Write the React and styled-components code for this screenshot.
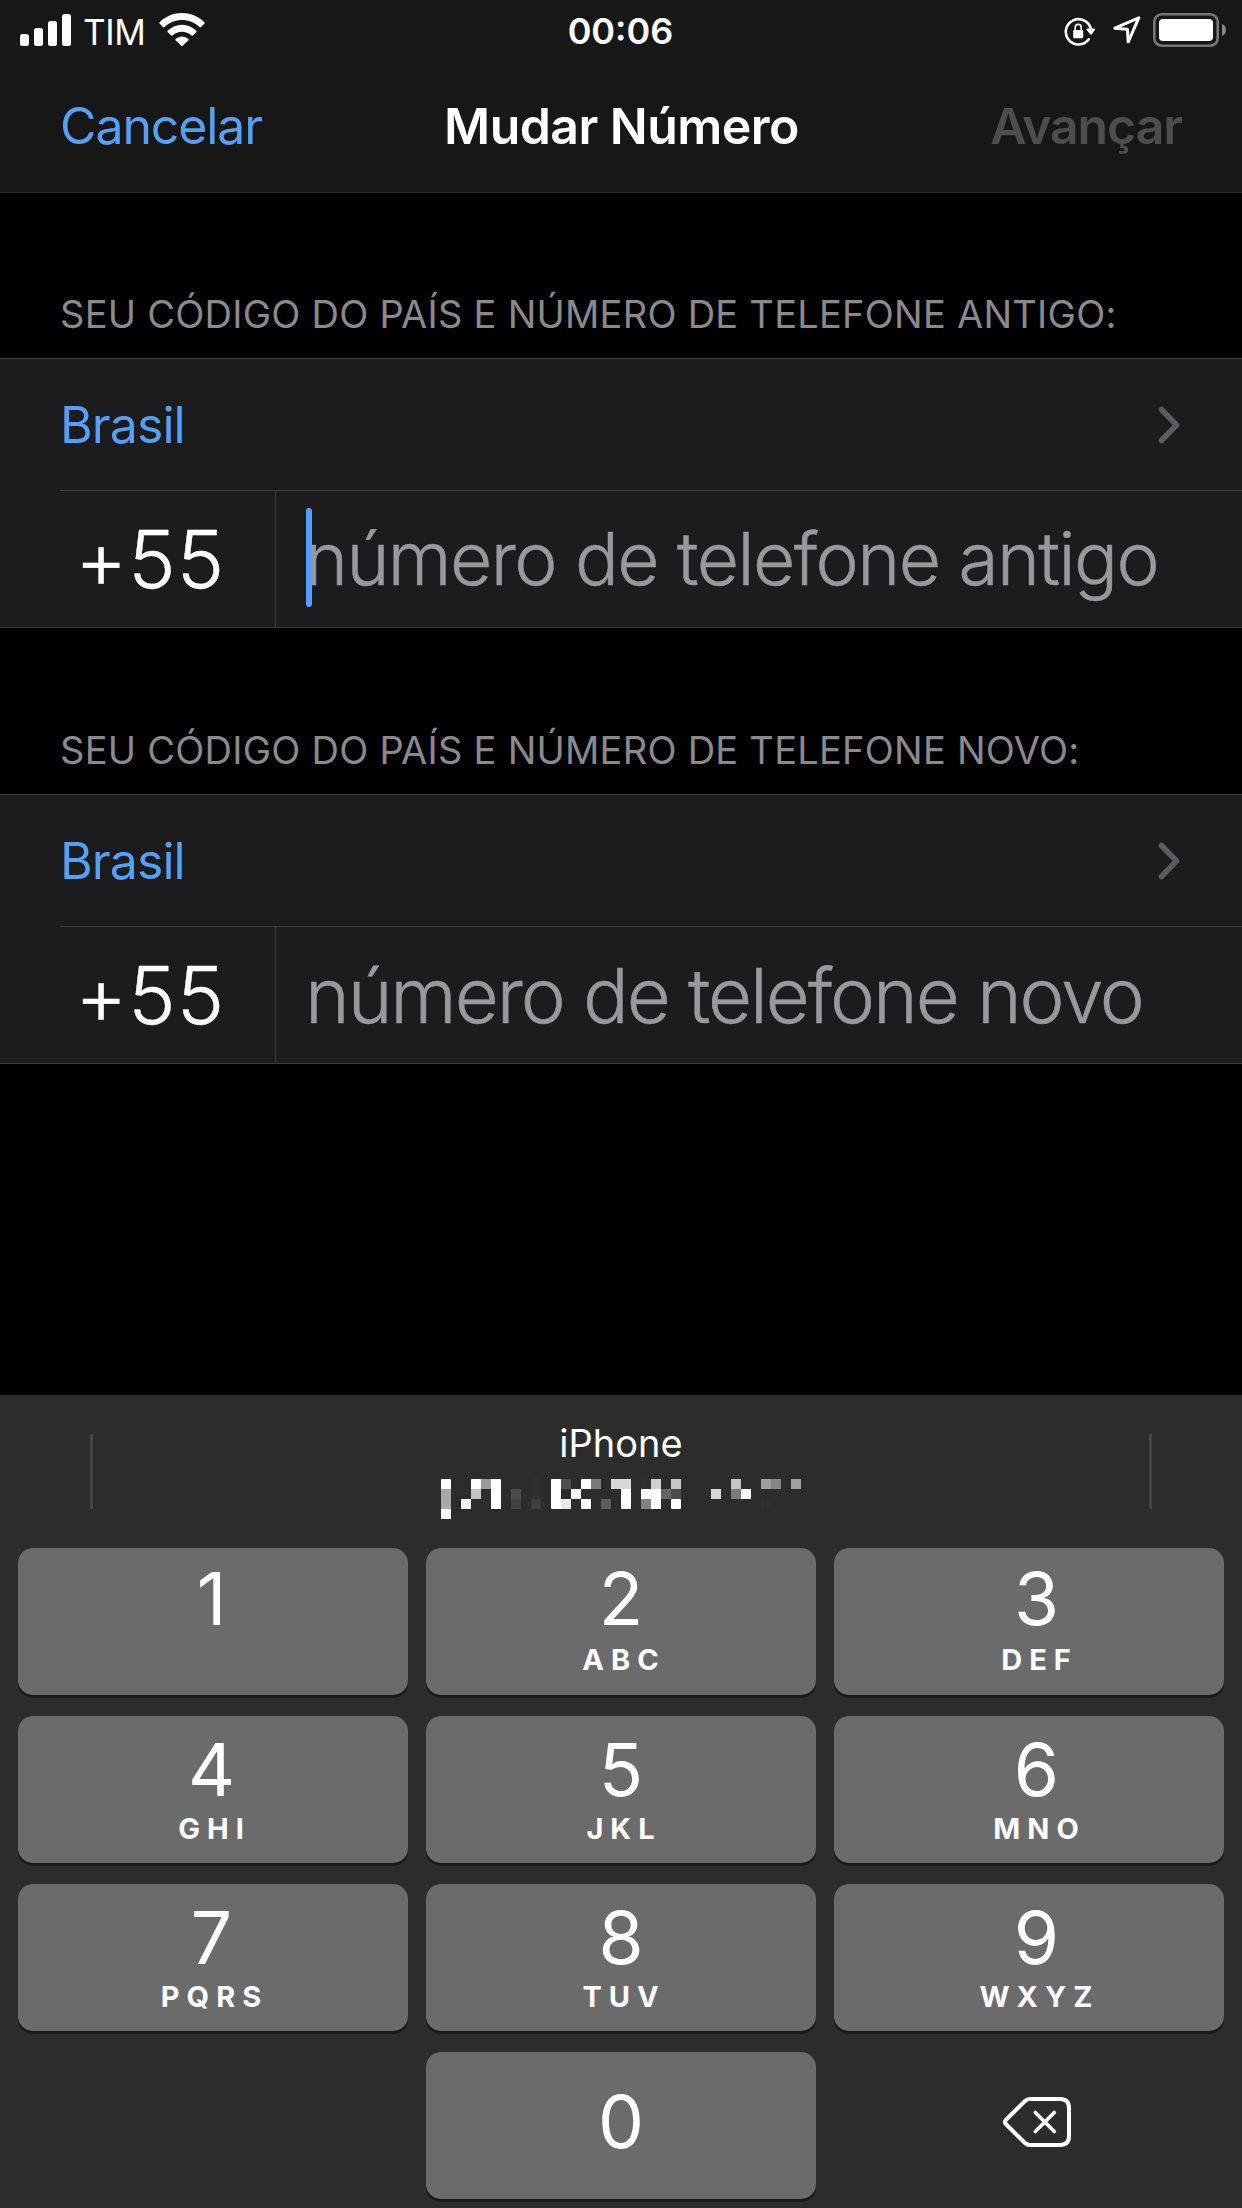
import styled, { createGlobalStyle } from "styled-components";

const GlobalStyle = createGlobalStyle`
  * {
    box-sizing: border-box;
  }

  body {
    margin: 0;
    background: #000;
  }
`;

const Screen = styled.div`
  display: flex;
  flex-direction: column;
  width: 1242px;
  height: 2208px;
  overflow: hidden;
  background: #000;
  color: #fff;
  font-family: Inter, "Liberation Sans", sans-serif;
`;

const Header = styled.header`
  height: 192px;
  background: #171717;
  box-shadow: 0 1px 0 #2a2a2b;
`;

const StatusBar = styled.div`
  display: grid;
  grid-template-columns: 1fr auto 1fr;
  height: 60px;
  padding: 0 16px 0 20px;
`;

const StatusGroup = styled.div`
  display: flex;
  align-items: center;
  justify-content: ${(props) => (props.$end ? "flex-end" : "flex-start")};
`;

const Carrier = styled.span`
  margin: 3px 14px 0 11px;
  font-size: 35px;
  line-height: 40px;
  letter-spacing: -0.4px;
`;

const Clock = styled.span`
  padding: 2px 5px 0 0;
  font-size: 36px;
  font-weight: 580;
  line-height: 58px;
  letter-spacing: 0;
`;

const NavBar = styled.nav`
  display: grid;
  grid-template-columns: 1fr auto 1fr;
  align-items: center;
  height: 132px;
  padding: 0 60px;
`;

const NavButton = styled.button`
  justify-self: ${(props) => (props.$end ? "end" : "start")};
  padding: 0;
  border: 0;
  background: none;
  color: ${(props) => (props.disabled ? "#4d4d4d" : "#559ff5")};
  font-family: inherit;
  font-size: 50px;
  font-weight: ${(props) => (props.$end ? 600 : 400)};
  line-height: 60px;
  letter-spacing: -1.1px;
`;

const Title = styled.h1`
  margin: 0;
  padding-left: 1px;
  font-size: 50px;
  font-weight: 600;
  line-height: 60px;
  letter-spacing: -0.55px;
`;

const SectionTitle = styled.h2`
  margin: 0;
  padding: 98px 60px 20px;
  color: #8a8a8e;
  font-size: 38px;
  font-weight: 400;
  line-height: 48px;
  letter-spacing: 0.25px;
  text-transform: uppercase;
  white-space: nowrap;
`;

const Card = styled.div`
  background: #1c1c1e;
  border-top: 1px solid #3c3c3f;
  border-bottom: 1px solid #3c3c3f;
`;

const CountryRow = styled.div`
  display: flex;
  align-items: center;
  justify-content: space-between;
  height: 132px;
  margin-left: 60px;
  padding-right: 61px;
  border-bottom: 1px solid #3c3c3f;
  color: #559ff5;
  font-size: 50px;
  letter-spacing: -0.9px;
`;

const PhoneRow = styled.div`
  display: flex;
  height: 136px;
  font-weight: 300;
  line-height: 136px;
  white-space: nowrap;
`;

const CountryCode = styled.div`
  width: 276px;
  padding-left: 75px;
  border-right: 1px solid #3c3c3f;
  font-size: 80px;
  letter-spacing: 1px;
  -webkit-text-stroke: 0.4px currentColor;
`;

const PhoneField = styled.div`
  position: relative;
  flex: 1;
  padding-left: 29px;
  color: #98989f;
  font-size: ${(props) => props.$size}px;
  letter-spacing: ${(props) => props.$tracking}px;
  -webkit-text-stroke: 0.5px currentColor;
`;

const Caret = styled.span`
  position: absolute;
  left: 30px;
  top: 17px;
  width: 6px;
  height: 99px;
  border-radius: 3px;
  background: #559ffa;
`;

const Keyboard = styled.div`
  height: 813px;
  margin-top: auto;
  background: #2c2c2c;
`;

const Suggestions = styled.div`
  display: flex;
  justify-content: space-between;
  height: 153px;
  padding: 0 90px;
`;

const Separator = styled.div`
  width: 3px;
  height: 75px;
  margin-top: 39px;
  background: #444;
`;

const Suggestion = styled.div`
  display: flex;
  flex-direction: column;
  align-items: center;
  padding-top: 24px;
  font-size: 38px;
  line-height: 48px;
  letter-spacing: 0;
`;

const Mosaic = styled.svg`
  margin-top: 12px;
`;

const Keys = styled.div`
  display: grid;
  grid-template-columns: repeat(3, 390px);
  grid-auto-rows: 147px;
  gap: 21px 18px;
  padding: 0 18px;
`;

const Key = styled.div`
  display: flex;
  flex-direction: column;
  align-items: center;
  grid-column: ${(props) => props.$column};
  padding-top: ${(props) => props.$top}px;
  padding-left: ${(props) => (props.$column === 3 ? 15 : 0)}px;
  padding-right: ${(props) => (props.$column === 1 ? 3 : 0)}px;
  border-radius: 15px;
  background: ${(props) => (props.$plain ? "none" : "#6b6b6b")};
  box-shadow: ${(props) => (props.$plain ? "none" : "0 3px 0 #1a1a1a")};
`;

const Digit = styled.span`
  font-size: 73px;
  line-height: 73px;
`;

const Letters = styled.span`
  margin-top: ${(props) => props.$gap}px;
  padding-left: 6px;
  font-size: 29px;
  font-weight: 700;
  line-height: 30px;
  letter-spacing: 7px;
`;

const keys = [
  { digit: "1", letters: "" },
  { digit: "2", letters: "ABC" },
  { digit: "3", letters: "DEF" },
  { digit: "4", letters: "GHI" },
  { digit: "5", letters: "JKL" },
  { digit: "6", letters: "MNO" },
  { digit: "7", letters: "PQRS" },
  { digit: "8", letters: "TUV" },
  { digit: "9", letters: "WXYZ" },
];

// [column, row, grey level]
const blocks = [
  [0, 0, 255], [0, 1, 169], [0, 2, 169], [0, 3, 255],
  [2, 2, 244], [3, 0, 255], [3, 1, 196], [4, 0, 154],
  [5, 0, 255], [5, 1, 255], [5, 2, 255],
  [7, 1, 74], [7, 2, 66], [9, 0, 48], [9, 1, 48], [9, 2, 63],
  [11, 0, 255], [11, 1, 255], [11, 2, 255],
  [12, 0, 77], [12, 2, 232], [13, 1, 255],
  [14, 0, 255], [14, 2, 255], [15, 0, 122], [16, 2, 92],
  [17, 0, 216], [18, 0, 216], [18, 1, 255], [18, 2, 255],
  [20, 0, 48], [20, 1, 255], [20, 2, 130],
  [21, 0, 208], [21, 1, 255], [21, 2, 255], [22, 1, 102],
  [23, 0, 198], [23, 1, 74], [23, 2, 255],
  [27, 1, 216], [29, 0, 198], [29, 1, 122], [30, 1, 255],
  [32, 0, 158], [32, 2, 48], [33, 0, 134], [35, 0, 162],
];

const SignalIcon = () => (
  <svg width="52" height="32" fill="#fff">
    <rect x="0" y="20" width="9" height="12" rx="2.5" />
    <rect x="14" y="14" width="9" height="18" rx="2.5" />
    <rect x="28" y="7" width="9" height="25" rx="2.5" />
    <rect x="42" y="0" width="9" height="32" rx="2.5" />
  </svg>
);

const WifiIcon = () => (
  <svg width="46" height="34" viewBox="0 0 46 34" fill="#fff">
    <path d="M.5 9.400C13-3 33-3 45.500 9.400Q46 10 45.500 10.600L42 14.100Q41.300 14.700 40.600 14.100C30.500 4.600 15.500 4.600 5.400 14.100Q4.700 14.700 4 14.100L.5 10.600Q0 10 .5 9.400Z" />
    <path d="M8.600 17.700C17 9.600 29 9.600 37.400 17.700Q38 18.300 37.400 18.900L33.800 22.400Q33.200 23 32.500 22.400C27 17.400 19 17.400 13.500 22.400Q12.800 23 12.200 22.400L8.600 18.900Q8 18.300 8.600 17.700Z" />
    <path d="M16.600 26C20.300 22.600 25.700 22.600 29.400 26Q30 26.600 29.400 27.200L23.700 32.800Q23 33.400 22.300 32.800L16.600 27.200Q16 26.600 16.600 26Z" />
  </svg>
);

const RotationLockIcon = () => (
  <svg width="32" height="30" viewBox="0 0 32 30" fill="none" stroke="#fff">
    <path d="M24.800 22.300A12.700 12.700 0 1 1 27 12.500" strokeWidth="2.600" strokeLinecap="round" />
    <path d="M23.600 12.500H30L27 16.700Z" fill="#fff" strokeWidth="2" strokeLinejoin="round" />
    <rect x="9.200" y="13" width="10" height="8.200" rx="1.200" fill="#fff" stroke="none" />
    <path d="M11.200 13.500V10.600A3 3.200 0 0 1 17.200 10.600V13.500" strokeWidth="1.600" />
  </svg>
);

const LocationIcon = () => (
  <svg width="28" height="28" viewBox="0 0 28 28" fill="none" stroke="#fff" strokeWidth="3" strokeLinejoin="round">
    <path d="M25.800 1.800L15.200 25.800L14.400 13.200L1.800 12.200Z" />
  </svg>
);

const BatteryIcon = () => (
  <svg width="73" height="34" viewBox="0 0 73 34">
    <rect x="1.300" y="1.300" width="63.400" height="31.400" rx="7.500" fill="none" stroke="#777" strokeWidth="2.600" />
    <rect x="6" y="6" width="54" height="22" rx="4" fill="#fff" />
    <path d="M69 11C74.300 12.500 74.300 21.500 69 23Z" fill="#868686" />
  </svg>
);

const ChevronIcon = () => (
  <svg width="23" height="38" viewBox="0 0 23 38" fill="none" stroke="#5b5b60" strokeWidth="5.600" strokeLinecap="round" strokeLinejoin="round">
    <path d="M3.500 3.500L18.500 19L3.500 34.500" />
  </svg>
);

const BackspaceIcon = () => (
  <svg width="68" height="50" viewBox="0 0 68 50" fill="none" stroke="#fff" strokeLinecap="round" strokeLinejoin="round">
    <path d="M27 2H57Q66 2 66 11V39Q66 48 57 48H27Q24 48 22 46L2.800 27Q1 25 2.800 23L22 4Q24 2 27 2Z" strokeWidth="4" />
    <path d="M32.300 15.500L51.300 34.500M51.300 15.500L32.300 34.500" strokeWidth="3.600" />
  </svg>
);

function PhoneSection({ title, placeholder, size, tracking, focused }) {
  return (
    <section>
      <SectionTitle>{title}</SectionTitle>
      <Card>
        <CountryRow>
          <span>Brasil</span>
          <ChevronIcon />
        </CountryRow>
        <PhoneRow>
          <CountryCode>+55</CountryCode>
          <PhoneField $size={size} $tracking={tracking}>
            {placeholder}
            {focused && <Caret />}
          </PhoneField>
        </PhoneRow>
      </Card>
    </section>
  );
}

const RightIcons = styled(StatusGroup)`
  & svg:nth-child(1) {
    margin: 4px 17px 0 0;
  }

  & svg:nth-child(2) {
    margin-right: 12px;
  }
`;

const EraseKey = styled(Key)`
  padding-top: 45px;
`;

function App() {
  return (
    <>
      <GlobalStyle />
      <Screen>
        <Header>
          <StatusBar>
            <StatusGroup>
              <SignalIcon />
              <Carrier>TIM</Carrier>
              <WifiIcon />
            </StatusGroup>
            <Clock>00:06</Clock>
            <RightIcons $end>
              <RotationLockIcon />
              <LocationIcon />
              <BatteryIcon />
            </RightIcons>
          </StatusBar>
          <NavBar>
            <NavButton>Cancelar</NavButton>
            <Title>Mudar Número</Title>
            <NavButton $end disabled>
              Avançar
            </NavButton>
          </NavBar>
        </Header>

        <PhoneSection
          title="Seu código do país e número de telefone antigo:"
          placeholder="número de telefone antigo"
          size={73}
          tracking={-1.55}
          focused
        />
        <PhoneSection
          title="Seu código do país e número de telefone novo:"
          placeholder="número de telefone novo"
          size={76}
          tracking={-2.05}
        />

        <Keyboard>
          <Suggestions>
            <Separator />
            <Suggestion>
              <span>iPhone</span>
              <Mosaic width="360" height="40" shapeRendering="crispEdges">
                {blocks.map(([col, row, level]) => (
                  <rect
                    key={`${col}-${row}`}
                    x={col * 10}
                    y={row * 10}
                    width="10"
                    height="10"
                    fill={`rgb(${level}, ${level}, ${level})`}
                  />
                ))}
              </Mosaic>
            </Suggestion>
            <Separator />
          </Suggestions>
          <Keys>
            {keys.map(({ digit, letters }, i) => (
              <Key key={digit} $column={(i % 3) + 1} $top={i < 3 ? 14 : 17}>
                <Digit>{digit}</Digit>
                {letters && <Letters $gap={i < 3 ? 10 : 8}>{letters}</Letters>}
              </Key>
            ))}
            <Key $column={2} $top={33}>
              <Digit>0</Digit>
            </Key>
            <EraseKey $column={3} $plain>
              <BackspaceIcon />
            </EraseKey>
          </Keys>
        </Keyboard>
      </Screen>
    </>
  );
}

export default App;
